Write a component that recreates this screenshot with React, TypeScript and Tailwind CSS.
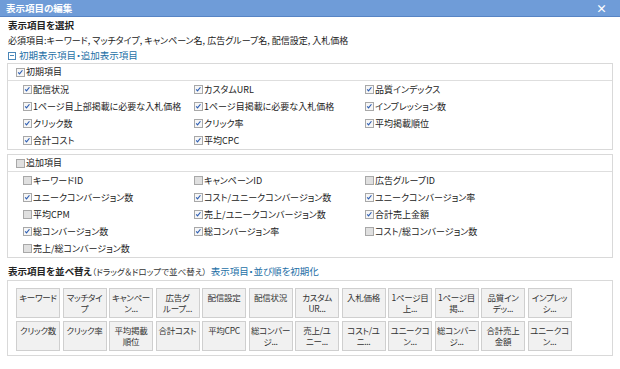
import React from 'react';

const initialItems: [string, boolean][][] = [
  [['配信状況', true], ['カスタムURL', true], ['品質インデックス', true]],
  [['1ページ目上部掲載に必要な入札価格', true], ['1ページ目掲載に必要な入札価格', true], ['インプレッション数', true]],
  [['クリック数', true], ['クリック率', true], ['平均掲載順位', true]],
  [['合計コスト', true], ['平均CPC', true]],
];

const extraItems: [string, boolean][][] = [
  [['キーワードID', false], ['キャンペーンID', false], ['広告グループID', false]],
  [['ユニークコンバージョン数', true], ['コスト/ユニークコンバージョン数', true], ['ユニークコンバージョン率', true]],
  [['平均CPM', false], ['売上/ユニークコンバージョン数', true], ['合計売上金額', true]],
  [['総コンバージョン数', true], ['総コンバージョン率', true], ['コスト/総コンバージョン数', false]],
  [['売上/総コンバージョン数', false]],
];

const sortRows: string[][][] = [
  [
    ['キーワード'], ['マッチタイ', 'プ'], ['キャンペー', 'ン...'], ['広告グ', 'ループ...'],
    ['配信設定'], ['配信状況'], ['カスタム', 'UR...'], ['入札価格'],
    ['1ページ目', '上...'], ['1ページ目', '掲...'], ['品質イン', 'デッ...'], ['インプレッ', 'シ...'],
  ],
  [
    ['クリック数'], ['クリック率'], ['平均掲載', '順位'], ['合計コスト'],
    ['平均CPC'], ['総コンバー', 'ジ...'], ['売上/ユ', 'ニー...'], ['コスト/ユ', 'ニ...'],
    ['ユニークコ', 'ン...'], ['総コンバー', 'ジ...'], ['合計売上', '金額'], ['ユニークコ', 'ン...'],
  ],
];

function Check({ on }: { on: boolean }) {
  return (
    <span
      className={`relative inline-block w-[9px] h-[9px] shrink-0 border border-[#a8a8a8] ${
        on ? 'bg-[#f6f6f6]' : 'bg-[#e0e0e0]'
      }`}
    >
      {on && (
        <svg viewBox="0 0 9 9" className="absolute left-0 top-0 w-[7px] h-[7px]">
          <path d="M1.5 4.2 L3.3 6.2 L7 1.6" fill="none" stroke="#2f5fb3" strokeWidth="1.5" />
        </svg>
      )}
    </span>
  );
}

function Item({ label, on }: { label: string; on: boolean }) {
  return (
    <div className="flex items-center gap-[1px] w-[171px] h-[17px] whitespace-nowrap">
      <Check on={on} />
      <span>{label}</span>
    </div>
  );
}

function Group({ title, on, rows }: { title: string; on: boolean; rows: [string, boolean][][] }) {
  return (
    <div className="border border-[#d9d9d9]">
      <div className="flex items-center gap-[1px] h-[17px] pl-[8px] border-b border-[#dedede]">
        <Check on={on} />
        <span>{title}</span>
      </div>
      <div className="pl-[15px]">
        {rows.map((row, i) => (
          <div key={i} className="flex">
            {row.map(([label, v]) => (
              <Item key={label} label={label} on={v} />
            ))}
          </div>
        ))}
      </div>
    </div>
  );
}

export default function App() {
  return (
    <div className="w-[620px] h-[369px] bg-white text-[#222] text-[9px] font-['Noto_Sans_CJK_JP',sans-serif] [font-feature-settings:'palt'] overflow-hidden">
      {/* title bar */}
      <div className="flex items-center justify-between h-[17px] px-[6px] bg-[#6f9cd8] border-b border-[#5784c4] text-white font-bold text-[9.5px]">
        <span>表示項目の編集</span>
        <span className="text-[11px] leading-none pr-[7px]">×</span>
      </div>

      <div className="px-[7px] pt-[1px]">
        <div className="h-[15px] leading-[15px] pl-[1px] font-bold text-[9.5px]">表示項目を選択</div>
        <div className="h-[15px] leading-[15px] pl-[1px]">
          必須項目:キーワード, マッチタイプ, キャンペーン名, 広告グループ名, 配信設定, 入札価格
        </div>
        <div className="flex items-center gap-[3px] h-[15px] pl-[1px] text-[#1d6fa6] text-[9.5px]">
          <span className="relative inline-block w-[8px] h-[8px] border border-[#4a86b8]">
            <span className="absolute left-[1px] top-[2.5px] w-[4px] h-[1px] bg-[#4a86b8]" />
          </span>
          <span>初期表示項目・追加表示項目</span>
        </div>

        <Group title="初期項目" on={true} rows={initialItems} />
        <div className="h-[4px]" />
        <Group title="追加項目" on={false} rows={extraItems} />

        <div className="flex items-center h-[14px] mt-[6px] mb-[2px] pl-[1px]">
          <span className="font-bold text-[9.5px]">表示項目を並べ替え</span>
          <span className="text-[#333] text-[8.5px]">（ドラッグ＆ドロップで並べ替え）</span>
          <span className="ml-[4px] text-[#1d6fa6] text-[9.5px]">表示項目・並び順を初期化</span>
        </div>

        <div className="border border-[#d9d9d9] pt-[7px] pb-[4px] pl-[8px] flex flex-col gap-[3px]">
          {sortRows.map((row, i) => (
            <div key={i} className="flex gap-[2.5px]">
              {row.map((lines, j) => (
                <div
                  key={j}
                  className="w-[44px] h-[30px] bg-[#f1f1f1] border border-[#cfcfcf] pt-[3px] text-center text-[8.5px] tracking-[-0.3px] leading-[11px] text-[#333] whitespace-nowrap overflow-hidden"
                >
                  {lines.map((l, k) => (
                    <div key={k}>{l}</div>
                  ))}
                </div>
              ))}
            </div>
          ))}
        </div>
      </div>
    </div>
  );
}
